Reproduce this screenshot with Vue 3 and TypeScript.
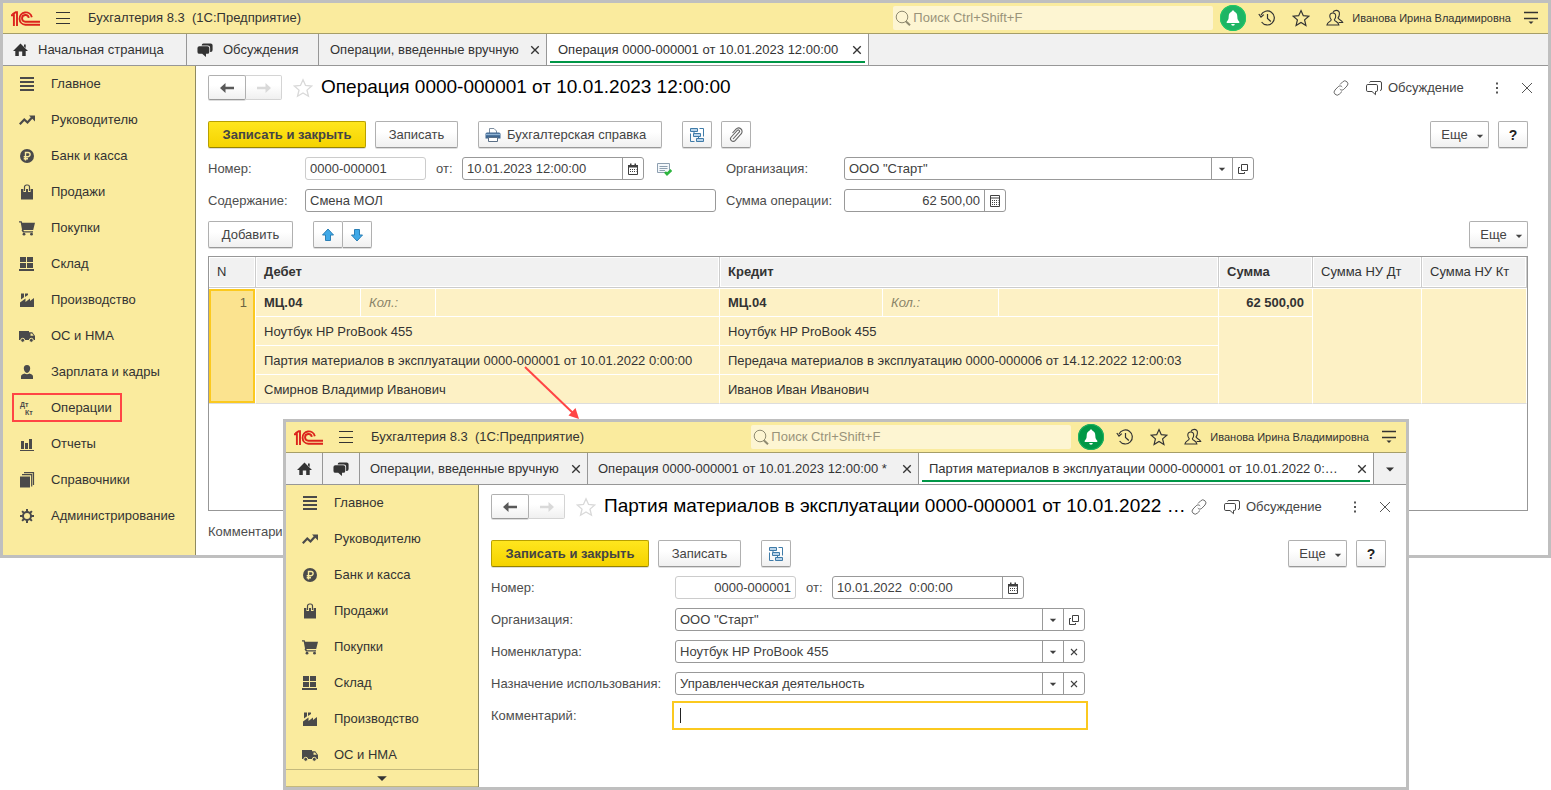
<script setup lang="ts">
import { ref } from 'vue'

interface Tab {
  label: string
  size: string
  icon?: string
  compact?: boolean
  closable?: boolean
  active?: boolean
}

interface AppWindow {
  id: 'operation' | 'batch'
  title: string
  heading: string
  tabs: Tab[]
  sections: number
}

const sections = [
  { icon: 'list', label: 'Главное' },
  { icon: 'trend', label: 'Руководителю' },
  { icon: 'ruble', label: 'Банк и касса' },
  { icon: 'bag', label: 'Продажи' },
  { icon: 'cart', label: 'Покупки' },
  { icon: 'boxes', label: 'Склад' },
  { icon: 'factory', label: 'Производство' },
  { icon: 'truck', label: 'ОС и НМА' },
  { icon: 'person', label: 'Зарплата и кадры' },
  { icon: 'dtkt', label: 'Операции' },
  { icon: 'chart', label: 'Отчеты' },
  { icon: 'books', label: 'Справочники' },
  { icon: 'gear', label: 'Администрирование' },
]

const windows: AppWindow[] = [
  {
    id: 'operation',
    title: 'Бухгалтерия 8.3  (1С:Предприятие)',
    heading: 'Операция 0000-000001 от 10.01.2023 12:00:00',
    sections: 13,
    tabs: [
      { label: 'Начальная страница', icon: 'home', size: 'tab-start' },
      { label: 'Обсуждения', icon: 'talk', size: 'tab-talk' },
      { label: 'Операции, введенные вручную', size: 'tab-list', closable: true },
      { label: 'Операция 0000-000001 от 10.01.2023 12:00:00', size: 'tab-doc', closable: true, active: true },
    ],
  },
  {
    id: 'batch',
    title: 'Бухгалтерия 8.3  (1С:Предприятие)',
    heading: 'Партия материалов в эксплуатации 0000-000001 от 10.01.2022 …',
    sections: 8,
    tabs: [
      { label: 'Начальная страница', icon: 'home', size: 'tab-icon', compact: true },
      { label: 'Обсуждения', icon: 'talk', size: 'tab-icon', compact: true },
      { label: 'Операции, введенные вручную', size: 'tab-list', closable: true },
      { label: 'Операция 0000-000001 от 10.01.2023 12:00:00 *', size: 'tab-changed', closable: true },
      { label: 'Партия материалов в эксплуатации 0000-000001 от 10.01.2022 0:…', size: 'tab-fill', closable: true, active: true },
    ],
  },
]

const operation = ref({
  number: '0000-000001',
  date: '10.01.2023 12:00:00',
  content: 'Смена МОЛ',
  amount: '62 500,00',
  comment: '',
})

const batch = ref({
  number: '0000-000001',
  date: '10.01.2022  0:00:00',
  comment: '',
})

const details = [
  { debit: 'Ноутбук HP ProBook 455', credit: 'Ноутбук HP ProBook 455' },
  {
    debit: 'Партия материалов в эксплуатации 0000-000001 от 10.01.2022 0:00:00',
    credit: 'Передача материалов в эксплуатацию 0000-000006 от 14.12.2022 12:00:03',
  },
  { debit: 'Смирнов Владимир Иванович', credit: 'Иванов Иван Иванович' },
]

const batchChoices = [
  { id: 'batch-item', label: 'Номенклатура:', value: 'Ноутбук HP ProBook 455' },
  { id: 'batch-use', label: 'Назначение использования:', value: 'Управленческая деятельность' },
]
</script>

<template>
  <svg class="sprite" aria-hidden="true">
    <symbol id="logo" viewBox="0 0 29 15">
      <g fill="none" stroke="#dc231c" stroke-width="1.9">
        <path d="M0 4.200H2.900V15M1.500 3.400 4.700 1.200H6V15" />
        <path d="M20.800 6.200A6.200 6.200 0 1 0 14.400 13.800H29" />
        <path d="M17.800 6.800A3.400 3.400 0 1 0 14.400 10.800H29" />
      </g>
    </symbol>
    <symbol id="burger" viewBox="0 0 14 14"><path d="M0 1.500H14M0 7.500H14M0 12.500H14" stroke="currentColor" /></symbol>
    <symbol id="search" viewBox="0 0 16 16"><g fill="none" stroke="currentColor"><circle cx="7" cy="7" r="5.800" /><path d="M11 11.500 15 15.300" stroke-width="2" /></g></symbol>
    <symbol id="bell" viewBox="0 0 26 26"><path d="M13 5.500c.9 0 1.400.6 1.400 1.300 2 .7 2.900 2.400 2.900 4.700 0 3 .8 4 2 5.300v1.200H6.700v-1.200c1.200-1.300 2-2.300 2-5.300 0-2.300.9-4 2.900-4.700 0-.7.5-1.300 1.400-1.300zM11.200 19h3.600a1.800 1.800 0 0 1-3.600 0z" fill="#fff" /></symbol>
    <symbol id="history" viewBox="0 0 18 18"><g fill="none" stroke="currentColor" stroke-width="1.200"><path d="M3 6A7 7 0 1 1 3.600 13" /><path d="M.8 5 3 8 5.800 5.600M9.500 5v4.500l3.300 3" /></g></symbol>
    <symbol id="star" viewBox="0 0 18 18"><path d="M9 1.600 11.300 6.700 16.800 7.200 12.600 10.900 13.900 16.400 9 13.500 4.100 16.400 5.400 10.900 1.200 7.200 6.700 6.700z" fill="none" stroke="currentColor" stroke-width="1.200" /></symbol>
    <symbol id="people" viewBox="0 0 18 18"><g fill="none" stroke="currentColor" stroke-width="1.100"><path d="M7 3.500C7.400 2 8.700 1.400 10.200 1.400c2.300 0 3.400 1.500 3.200 3.700-.1 1.700-.6 2.900-1.400 3.800.2 1.800 3.800 1.700 4.700 4.600h-4" /><path d="M6.800 4c2 0 3 1.400 2.900 3.300-.1 1.500-.6 2.500-1.300 3.400.2 2 4 1.900 4.500 5.300H.9c.5-3.400 4.100-3.300 4.300-5.300-.8-.9-1.300-1.900-1.400-3.400C3.700 5.400 4.800 4 6.800 4z" /></g></symbol>
    <symbol id="service" viewBox="0 0 14 14"><path d="M0 1.500H14M0 7.500H14" stroke="currentColor" stroke-width="1.300" /><path d="M4.500 10.500h5L7 13z" fill="currentColor" /></symbol>

    <symbol id="home" viewBox="0 0 16 16"><path d="M8 1.500 15.500 9H13.200V14H9.700V9.500H6.300V14H2.800V9H.5zM11.500 2.500h1.700V6l-1.700-1.600z" fill="currentColor" /></symbol>
    <symbol id="talk" viewBox="0 0 18 16"><g fill="currentColor"><path d="M2.500 4h8.500A2 2 0 0 1 13 6v4a2 2 0 0 1-2 2H9.500v3.500L5.500 12h-3a2 2 0 0 1-2-2V6a2 2 0 0 1 2-2z" /><path d="M5 3.200V2.900A1.800 1.800 0 0 1 6.800 1.100h7.700a2 2 0 0 1 2 2v5a2 2 0 0 1-2 2h-.6V5.500a2.300 2.300 0 0 0-2.300-2.300z" /></g></symbol>

    <symbol id="list" viewBox="0 0 16 16"><path d="M1 2H15M1 6H15M1 10H15M1 14H15" stroke="currentColor" stroke-width="2" /></symbol>
    <symbol id="trend" viewBox="0 0 16 16"><path d="M.8 12.300 5.300 7.500 8.500 10.500 13 5.500" fill="none" stroke="currentColor" stroke-width="2.200" /><path d="M10 3.500h6v6z" fill="currentColor" /></symbol>
    <symbol id="ruble" viewBox="0 0 16 16"><circle cx="8" cy="8" r="7" fill="currentColor" /><path d="M6.500 12.500V4.500H9a2.100 2.100 0 0 1 0 4.200H4.700M4.700 10.700H9" fill="none" stroke="#faeb9e" stroke-width="1.400" /></symbol>
    <symbol id="bag" viewBox="0 0 16 16"><path d="M2 5H14V15.500H2z" fill="currentColor" /><path d="M5.700 8V3.300A1.800 1.800 0 0 1 7.500 1.200H8.500A1.800 1.800 0 0 1 10.300 3.300V8" fill="none" stroke="#faeb9e" stroke-width="2.600" /><path d="M5.500 7V3A2 2 0 0 1 7.500 1H8.500A2 2 0 0 1 10.500 3V7" fill="none" stroke="currentColor" stroke-width="1.200" /></symbol>
    <symbol id="cart" viewBox="0 0 16 16"><path d="M0 1.300H2.700L3.200 2.800H16L14.200 10H4.300L5 11.200H14V12.600H4L2.600 10.500 3 9.600 1.700 2.600H0z" fill="currentColor" /><circle cx="5" cy="14.200" r="1.400" fill="currentColor" /><circle cx="12.500" cy="14.200" r="1.400" fill="currentColor" /></symbol>
    <symbol id="boxes" viewBox="0 0 16 16"><path d="M1 1h6v5H1zM8 1H14v5H8zM1 7h6V12H1zM8 7H14V12H8zM0 13h15V15H0z" fill="currentColor" /></symbol>
    <symbol id="factory" viewBox="0 0 16 16"><path d="M1 15V10.500L6.500 6.500V10L11 6.500V9L15 6V15zM2 1.500H5V5.300L2 7.500zM6 1.500H9V3L6 5z" fill="currentColor" /></symbol>
    <symbol id="truck" viewBox="0 0 16 16"><path d="M0 3H10V12H0zM10 4.300h3.300L16 8v4h-6z" fill="currentColor" /><path d="M11.500 5.500h1.600l1.600 2.300h-3.200z" fill="#faeb9e" /><g fill="currentColor" stroke="#faeb9e"><circle cx="3.700" cy="12.300" r="2" /><circle cx="12.300" cy="12.300" r="2" /></g></symbol>
    <symbol id="person" viewBox="0 0 16 16"><path d="M8 1c2.300 0 3.300 1.600 3.200 3.600C11 7 9.800 9 8 9S5 7 4.800 4.600C4.700 2.600 5.700 1 8 1zM2 15V12.500C2 10.500 4 10 5.500 9.500 7 10.600 9 10.600 10.500 9.500 12 10 14 10.500 14 12.500V15z" fill="currentColor" /></symbol>
    <symbol id="chart" viewBox="0 0 16 16"><path d="M2 5H5V13H2zM6 7H9V13H6zM10 3H13V13H10zM1 14H15V15H1z" fill="currentColor" /></symbol>
    <symbol id="books" viewBox="0 0 16 16"><path d="M1 4.500H11V15.500H1z" fill="currentColor" /><path d="M3 2.700H12.700V14.500M5 .7H14.500V13" fill="none" stroke="currentColor" stroke-width="1.200" /></symbol>
    <symbol id="gear" viewBox="0 0 16 16"><circle cx="8" cy="8" r="4" fill="none" stroke="currentColor" stroke-width="2" /><path d="M8 1V4M8 12V15M1 8H4M12 8H15M3.100 3.100 5.200 5.200M10.800 10.800 12.900 12.900M3.100 12.900 5.200 10.800M10.800 5.200 12.900 3.100" stroke="currentColor" stroke-width="2" /></symbol>

    <symbol id="back" viewBox="0 0 16 16"><path d="M1 8 6.500 3V6.700H15V9.300H6.500V13z" fill="currentColor" /></symbol>
    <symbol id="forward" viewBox="0 0 16 16"><path d="M15 8 9.500 3V6.700H1V9.300H9.500V13z" fill="currentColor" /></symbol>
    <symbol id="link" viewBox="0 0 16 16"><g fill="none" stroke="currentColor"><path d="M7 4.500 9.700 1.800A2.600 2.600 0 0 1 14 6L10.800 9.300A2.600 2.600 0 0 1 6.800 9" /><path d="M9 11.500 6.300 14.200A2.600 2.600 0 0 1 2 10L5.200 6.700A2.600 2.600 0 0 1 9.200 7" /></g></symbol>
    <symbol id="discuss" viewBox="0 0 16 16"><g fill="none" stroke="currentColor"><path d="M1.800 4.500H10.200A1.300 1.300 0 0 1 11.500 5.800V10.200A1.300 1.300 0 0 1 10.200 11.500H9.500V14.700L6 11.500H1.800A1.300 1.300 0 0 1 .5 10.200V5.800A1.300 1.300 0 0 1 1.800 4.500z" /><path d="M3.500 2.500A1.500 1.500 0 0 1 5 1.500H14A1.500 1.500 0 0 1 15.500 3V9A1.500 1.500 0 0 1 14 10.500" /></g></symbol>
    <symbol id="dots" viewBox="0 0 16 16"><path d="M7 2.500h2v2H7zM7 7h2v2H7zM7 11.500h2v2H7z" fill="currentColor" /></symbol>
    <symbol id="cross" viewBox="0 0 16 16"><path d="M3 3 13 13M13 3 3 13" stroke="currentColor" /></symbol>
    <symbol id="small-cross" viewBox="0 0 8 8"><path d="M1 1 7 7M7 1 1 7" stroke="currentColor" stroke-width="1.100" /></symbol>
    <symbol id="caret-down" viewBox="0 0 10 10"><path d="M1 3.500H9L5 7.500z" fill="currentColor" /></symbol>

    <symbol id="print" viewBox="0 0 16 16"><path d="M4.500 6V1.500H9L11.500 4V6" fill="#fff" stroke="#7d8ea0" /><path d="M2 5.500H14A1.500 1.500 0 0 1 15.500 7V11.500H.5V7A1.500 1.500 0 0 1 2 5.500z" fill="#3f6791" /><path d="M1 7.500H15" stroke="#8fb3d4" stroke-width="1.400" /><path d="M3.500 10.500H12.500V14.500H3.500z" fill="#fff" stroke="#5a6f86" /></symbol>
    <symbol id="structure" viewBox="0 0 16 16"><g stroke="#3f7ba8" fill="#b9d4ea"><path d="M1.500 1.500H8.500V4.500H1.500zM4.500 6.500H11.500V9.500H4.500zM7.500 11.500H14.500V14.500H7.500z" /><path d="M10.500 1.500H14.500V9.500M5.500 14.500H1.500V6.500M5 4.500V6.500M9.500 9.500V11.500" fill="none" /></g></symbol>
    <symbol id="clip" viewBox="0 0 16 16"><path d="M5 12 11.200 5.200A1.300 1.300 0 0 0 9.300 3.400L3.300 10A2.600 2.600 0 0 0 7.100 13.600L13.100 7A3.500 3.500 0 0 0 8 2.100L4.500 6" fill="none" stroke="#666" stroke-width="1.100" /></symbol>
    <symbol id="calendar" viewBox="0 0 12 12"><path d="M1.500 2.500H10.500V11.500H1.500z" fill="#fff" stroke="currentColor" /><path d="M1 2H11V4.500H1zM3 .5h1.500V3H3zM7.500 .5H9V3H7.500z" fill="currentColor" /><path d="M3 6.500H9.500M3 8.500H9.500" stroke="currentColor" stroke-dasharray="1 1" /></symbol>
    <symbol id="calculator" viewBox="0 0 12 12"><path d="M1.500 .5H10.500V11.500H1.500z" fill="#fff" stroke="currentColor" /><path d="M2 3H10" stroke="currentColor" stroke-width="1" /><path d="M3 5.500H9.500M3 7.500H9.500M3 9.500H9.500" stroke="currentColor" stroke-dasharray="1 1" /></symbol>
    <symbol id="open" viewBox="0 0 12 12"><path d="M4.500 1.500H10.500V7.500H4.500zM3 4.500H1.500V10.500H7.500V9" fill="none" stroke="currentColor" /></symbol>
    <symbol id="posted" viewBox="0 0 16 16"><path d="M1.500 2.500H13.500V11.500H1.500z" fill="#f4f8fb" stroke="#8d9fb0" /><path d="M3.500 5.500H11.500M3.500 7.500H11.500M3.500 9.500H9" stroke="#8d9fb0" /><path d="M9 11 11 13.200 15.300 9" fill="none" stroke="#2db53f" stroke-width="2.600" /></symbol>
    <symbol id="arrow-up" viewBox="0 0 14 14"><path d="M7 1 12.500 7H9.500V12.500H4.500V7H1.500z" fill="#3fa9e8" stroke="#2b7fb5" /></symbol>
    <symbol id="arrow-down" viewBox="0 0 14 14"><path d="M7 13 12.500 7H9.500V1.500H4.500V7H1.500z" fill="#3fa9e8" stroke="#2b7fb5" /></symbol>
  </svg>

  <main class="desktop">
    <section v-for="w in windows" :key="w.id" class="window" :class="w.id" :aria-label="w.heading">
      <header class="title-bar">
        <svg class="logo"><use href="#logo" /></svg>
        <button class="plain" aria-label="Меню"><svg class="i14"><use href="#burger" /></svg></button>
        <span class="app-name">{{ w.title }}</span>
        <label class="search">
          <svg class="i16"><use href="#search" /></svg>
          <input type="search" placeholder="Поиск Ctrl+Shift+F" aria-label="Поиск" />
        </label>
        <button class="plain bell" aria-label="Уведомления"><svg class="i26"><use href="#bell" /></svg></button>
        <div class="tools">
          <button class="plain" aria-label="История"><svg class="i18"><use href="#history" /></svg></button>
          <button class="plain" aria-label="Избранное"><svg class="i18"><use href="#star" /></svg></button>
          <button class="plain" aria-label="Пользователи"><svg class="i18"><use href="#people" /></svg></button>
        </div>
        <span class="user">Иванова Ирина Владимировна</span>
        <button class="plain" aria-label="Сервис"><svg class="i14"><use href="#service" /></svg></button>
      </header>

      <nav class="tabs" aria-label="Открытые окна">
        <div v-for="tab in w.tabs" :key="tab.label" class="tab" :class="[tab.size, { active: tab.active }]">
          <button class="plain tab-button" :aria-label="tab.label">
            <svg v-if="tab.icon" class="tab-glyph"><use :href="'#' + tab.icon" /></svg>
            <span v-if="!tab.compact" class="tab-label">{{ tab.label }}</span>
          </button>
          <button v-if="tab.closable" class="plain" aria-label="Закрыть вкладку"><svg class="i10"><use href="#small-cross" /></svg></button>
        </div>
        <button v-if="w.id === 'batch'" class="plain more-tabs" aria-label="Все вкладки"><svg class="i10"><use href="#caret-down" /></svg></button>
      </nav>

      <div class="body">
        <aside class="sidebar">
          <a
            v-for="s in sections.slice(0, w.sections)"
            :key="s.label"
            href="#"
            class="section"
            :class="{ marked: s.icon === 'dtkt' }"
          >
            <svg v-if="s.icon === 'dtkt'" class="i16 letters" viewBox="0 0 16 16" aria-hidden="true">
              <text x="1" y="7">Дт</text>
              <text x="6" y="15">Кт</text>
            </svg>
            <svg v-else class="i16"><use :href="'#' + s.icon" /></svg>{{ s.label }}
          </a>
          <button v-if="w.id === 'batch'" class="plain scroll-down" aria-label="Прокрутить вниз"><svg class="i12"><use href="#caret-down" /></svg></button>
        </aside>

        <div class="content">
          <div class="heading-row">
            <div class="pair">
              <button class="button nav" aria-label="Назад"><svg class="i16"><use href="#back" /></svg></button>
              <button class="button nav disabled" aria-label="Вперед" disabled><svg class="i16"><use href="#forward" /></svg></button>
            </div>
            <button class="plain favorite" aria-label="В избранное"><svg class="i20"><use href="#star" /></svg></button>
            <h1>{{ w.heading }}</h1>
            <button class="plain link" aria-label="Ссылка"><svg class="i16"><use href="#link" /></svg></button>
            <button class="plain discuss"><svg class="i16"><use href="#discuss" /></svg>Обсуждение</button>
            <button class="plain dots" aria-label="Еще действия"><svg class="i16"><use href="#dots" /></svg></button>
            <button class="plain close" aria-label="Закрыть"><svg class="i16"><use href="#cross" /></svg></button>
          </div>

          <div class="commands">
            <button class="button primary">Записать и закрыть</button>
            <button class="button save">Записать</button>
            <button v-if="w.id === 'operation'" class="button report group">
              <svg class="i16"><use href="#print" /></svg>Бухгалтерская справка
            </button>
            <button class="button square group" aria-label="Структура подчиненности"><svg class="i16"><use href="#structure" /></svg></button>
            <button v-if="w.id === 'operation'" class="button square" aria-label="Присоединенные файлы"><svg class="i16"><use href="#clip" /></svg></button>
            <button class="button more">Еще<svg class="i8"><use href="#caret-down" /></svg></button>
            <button class="button square help">?</button>
          </div>

          <template v-if="w.id === 'operation'">
            <div class="form operation-form">
              <label for="op-number">Номер:</label>
              <div class="line">
                <input id="op-number" v-model="operation.number" class="field number" />
                <label for="op-date" class="from">от:</label>
                <div class="field date">
                  <input id="op-date" v-model="operation.date" />
                  <button class="plain cell" aria-label="Календарь"><svg class="i12"><use href="#calendar" /></svg></button>
                </div>
                <svg class="i16 posted"><use href="#posted" /></svg>
              </div>
              <label for="op-org" class="second">Организация:</label>
              <div class="field combo">
                <select id="op-org"><option>ООО "Старт"</option></select>
                <span class="cell arrow"><svg class="i8"><use href="#caret-down" /></svg></span>
                <button class="plain cell" aria-label="Открыть"><svg class="i12"><use href="#open" /></svg></button>
              </div>
              <label for="op-content">Содержание:</label>
              <input id="op-content" v-model="operation.content" class="field" />
              <label for="op-amount" class="second">Сумма операции:</label>
              <div class="field amount">
                <input id="op-amount" v-model="operation.amount" />
                <button class="plain cell" aria-label="Калькулятор"><svg class="i12"><use href="#calculator" /></svg></button>
              </div>
            </div>

            <div class="commands row-commands">
              <button class="button add">Добавить</button>
              <div class="pair group">
                <button class="button move" aria-label="Вверх"><svg class="i14"><use href="#arrow-up" /></svg></button>
                <button class="button move" aria-label="Вниз"><svg class="i14"><use href="#arrow-down" /></svg></button>
              </div>
              <button class="button more">Еще<svg class="i8"><use href="#caret-down" /></svg></button>
            </div>

            <div class="table-frame">
              <table>
                <colgroup>
                  <col class="c-n" /><col class="c-dt" /><col class="c-dq" /><col class="c-dr" />
                  <col class="c-kt" /><col class="c-kq" /><col /><col class="c-sum" /><col class="c-nud" /><col class="c-nuk" />
                </colgroup>
                <thead>
                  <tr>
                    <th class="light">N</th>
                    <th colspan="3">Дебет</th>
                    <th colspan="3">Кредит</th>
                    <th>Сумма</th>
                    <th class="light">Сумма НУ Дт</th>
                    <th class="light">Сумма НУ Кт</th>
                  </tr>
                </thead>
                <tbody>
                  <tr class="first">
                    <td rowspan="4" class="current">1</td>
                    <td class="account">МЦ.04</td>
                    <td class="quantity">Кол.:</td>
                    <td></td>
                    <td class="account">МЦ.04</td>
                    <td class="quantity">Кол.:</td>
                    <td></td>
                    <td class="sum">62 500,00</td>
                    <td rowspan="4" class="tall"></td>
                    <td rowspan="4" class="tall"></td>
                  </tr>
                  <tr v-for="(d, i) in details" :key="i">
                    <td colspan="3">{{ d.debit }}</td>
                    <td colspan="3">{{ d.credit }}</td>
                    <td v-if="i === 0" rowspan="3" class="tall"></td>
                  </tr>
                </tbody>
              </table>
            </div>

            <div class="form operation-form comment">
              <label for="op-comment">Комментарий:</label>
              <input id="op-comment" v-model="operation.comment" class="field" />
            </div>
          </template>

          <div v-else class="form batch-form">
            <label for="batch-number">Номер:</label>
            <div class="line">
              <input id="batch-number" v-model="batch.number" class="field number right" />
              <label for="batch-date" class="from">от:</label>
              <div class="field date wide">
                <input id="batch-date" v-model="batch.date" />
                <button class="plain cell" aria-label="Календарь"><svg class="i12"><use href="#calendar" /></svg></button>
              </div>
            </div>
            <label for="batch-org">Организация:</label>
            <div class="field combo">
              <select id="batch-org"><option>ООО "Старт"</option></select>
              <span class="cell arrow"><svg class="i8"><use href="#caret-down" /></svg></span>
              <button class="plain cell" aria-label="Открыть"><svg class="i12"><use href="#open" /></svg></button>
            </div>
            <template v-for="c in batchChoices" :key="c.id">
              <label :for="c.id">{{ c.label }}</label>
              <div class="field combo">
                <select :id="c.id"><option>{{ c.value }}</option></select>
                <span class="cell arrow"><svg class="i8"><use href="#caret-down" /></svg></span>
                <button class="plain cell" aria-label="Очистить"><svg class="i8"><use href="#small-cross" /></svg></button>
              </div>
            </template>
            <label for="batch-comment">Комментарий:</label>
            <div class="focused">
              <input id="batch-comment" v-model="batch.comment" />
              <i class="text-cursor"></i>
            </div>
          </div>
        </div>
      </div>
    </section>

    <svg class="pointer" viewBox="0 0 58 56" aria-hidden="true">
      <path d="M1 2 50 49" stroke="#ff4545" stroke-width="2" />
      <path d="M55 54 44.500 50.500 51.500 43z" fill="#ff4545" />
    </svg>
  </main>
</template>

<style>
body {
  background: #fff;
}
</style>

<style scoped>
.sprite {
  position: absolute;
  width: 0;
  height: 0;
}

.desktop {
  position: relative;
  min-height: 100vh;
  overflow: hidden;
  font-family: 'Liberation Sans', Arial, sans-serif;
  font-size: 13px;
  line-height: 16px;
  color: #404040;
}

.desktop *,
.desktop *::after {
  box-sizing: border-box;
}

svg {
  display: block;
  flex: none;
}

.i8 { width: 8px; height: 8px; }
.i10 { width: 10px; height: 10px; }
.i12 { width: 12px; height: 12px; }
.i14 { width: 14px; height: 14px; }
.i16 { width: 16px; height: 16px; }
.i18 { width: 18px; height: 18px; }
.i20 { width: 20px; height: 20px; }
.i26 { width: 26px; height: 26px; }

button,
input,
select {
  font: inherit;
  color: inherit;
  margin: 0;
}

.plain {
  display: flex;
  align-items: center;
  flex: none;
  padding: 0;
  border: 0;
  background: none;
}

.window {
  border: 3px solid #bfbfbf;
  background: #fff;
}

.batch {
  position: absolute;
  left: 283px;
  top: 419px;
  width: 1126px;
}

.title-bar {
  display: flex;
  align-items: center;
  height: 31px;
  padding: 0 10px 0 8px;
  border-bottom: 1px solid #a69e68;
  background: #faeb9e;
  color: #333;
}

.logo {
  width: 29px;
  height: 15px;
  margin-right: 16px;
}

.app-name {
  margin: 0 auto 0 18px;
  white-space: pre;
}

.search {
  display: flex;
  align-items: center;
  width: 320px;
  height: 24px;
  padding-left: 2px;
  border-radius: 2px;
  background: #fdf5d2;
  color: #8f8a70;
}

.search input {
  flex: 1;
  min-width: 0;
  padding: 0 0 0 2px;
  border: 0;
  outline: 0;
  background: none;
}

.search input::placeholder {
  color: #99937a;
}

.bell {
  margin: 0 12px 0 7px;
  border-radius: 50%;
  background: #1db564;
  box-shadow: inset 0 0 0 1px #22c968;
}

.batch .bell {
  background: #009846;
  box-shadow: inset 0 0 0 1px #1fb262;
}

.tools {
  display: flex;
  gap: 16px;
}

.user {
  margin: 0 13px 0 8px;
  font-size: 11px;
  white-space: nowrap;
}

.tabs {
  display: flex;
  height: 32px;
  border-bottom: 1px solid #979797;
  background: #f1f1f1;
  color: #333;
}

.tab {
  position: relative;
  display: flex;
  align-items: center;
  justify-content: space-between;
  padding: 0 6px 0 11px;
  border-right: 1px solid #979797;
}

.batch .tab {
  padding-left: 10px;
}

.tab-button {
  flex: 0 1 auto;
  min-width: 0;
  gap: 9px;
}

.tab-label {
  white-space: nowrap;
}

.tab-glyph {
  width: 17px;
  height: 16px;
}

.tab-start { width: 184px; padding-left: 9px; }
.tab-talk { width: 132px; padding-left: 10px; }
.tab-list { width: 228px; }
.tab-doc { width: 322px; }
.tab-changed { width: 331px; }
.batch .tab-icon { width: 37px; justify-content: center; padding: 0; }
.tab-fill { flex: 1; min-width: 0; }

.tab.active {
  background: #fff;
}

.tab.active::after {
  content: '';
  position: absolute;
  left: 3px;
  right: 3px;
  bottom: 2px;
  height: 2px;
  background: #009646;
}

.more-tabs {
  width: 32px;
  justify-content: center;
}

.body {
  display: flex;
}

.sidebar {
  flex: none;
  width: 193px;
  border-right: 1px solid #8f8a60;
  background: #faeb9e;
  color: #4a4a4a;
}

.section {
  position: relative;
  display: flex;
  align-items: center;
  gap: 16px;
  height: 36px;
  padding-left: 16px;
  color: #333;
  text-decoration: none;
}

.section svg {
  color: #4a4a4a;
}

.letters {
  overflow: visible;
  font-size: 7px;
  font-weight: 700;
  fill: #4a4a4a;
}

.section.marked::after {
  content: '';
  position: absolute;
  inset: 3px 73px 4px 9px;
  border: 2px solid #ff4545;
}

.batch .section:nth-child(8) {
  height: 32px;
  padding-top: 4px;
}

.scroll-down {
  justify-content: center;
  width: 100%;
  height: 18px;
  border-top: 1px solid #c4b97c;
  border-bottom: 1px solid #c4b97c;
  color: #333;
}

.content {
  flex: 1;
  min-width: 0;
  padding: 9px 20px 12px 12px;
}

.heading-row {
  display: flex;
  align-items: center;
  height: 25px;
  margin: 0 -7px 21px 0;
}

.pair {
  display: flex;
}

.button {
  display: flex;
  align-items: center;
  justify-content: center;
  flex: none;
  height: 27px;
  padding: 0;
  border: 1px solid #b0b0b0;
  border-bottom-color: #999;
  border-radius: 2px;
  background: linear-gradient(#fff 40%, #f0f0f0);
  box-shadow: 0 1px 0 #ddd;
  color: #444;
}

.pair .button + .button {
  border-left: 0;
  border-radius: 0 2px 2px 0;
}

.nav {
  width: 38px;
  height: 25px;
  color: #595959;
}

.nav.disabled {
  width: 36px;
  border-color: #d4d4d4;
  box-shadow: none;
  color: #d9d9d9;
}

.favorite {
  margin: 0 8px 0 11px;
  color: #d9d9d9;
}

h1 {
  flex: 1;
  min-width: 0;
  margin: 0;
  font-size: 19px;
  font-weight: 400;
  line-height: 23px;
  padding-bottom: 2px;
  color: #000;
  white-space: nowrap;
}

.link { color: #6b6b6b; }
.discuss { gap: 6px; width: 100px; margin: 0 23px 0 17px; color: #444; }
.dots { color: #555; }
.close { margin-left: 14px; color: #555; }

.commands {
  display: flex;
  gap: 9px;
  margin-bottom: 9px;
}

.row-commands {
  margin: 9px 0 8px;
}

.group { margin-left: 11px; }
.primary {
  width: 158px;
  border-color: #b8a000;
  border-bottom-color: #968300;
  background: linear-gradient(#ffe61e, #f5d300);
  font-weight: 700;
}
.save { width: 83px; }
.report { width: 184px; gap: 6px; justify-content: flex-start; padding-left: 6px; }
.square { width: 30px; }
.add { width: 85px; }
.move { width: 30px; }
.move + .move { width: 29px; }
.more { width: 59px; gap: 8px; padding-left: 6px; margin-left: auto; }
.more svg { margin-top: 3px; }
.help { font-size: 14px; font-weight: 700; color: #222; }

.form {
  display: grid;
  align-items: center;
  grid-auto-rows: 23px;
  row-gap: 9px;
}

.operation-form {
  grid-template-columns: 97px minmax(0, 411px) 128px minmax(0, 410px);
}

.batch-form {
  grid-template-columns: 184px minmax(0, 410px);
}

.form label {
  white-space: nowrap;
  color: #4d4d4d;
}

.second {
  padding-left: 10px;
}

.line {
  display: flex;
  align-items: center;
}

.field {
  height: 23px;
  min-width: 0;
  padding: 0 4px;
  border: 1px solid #999;
  border-radius: 3px;
  background: #fff;
  color: #404040;
}

.number {
  width: 121px;
  border-color: #ccc;
}

.right {
  text-align: right;
}

.from {
  width: 36px;
  padding-left: 10px;
}

.date,
.amount {
  display: flex;
  width: 182px;
  padding: 0;
}

.date.wide { width: 192px; }
.amount { width: 162px; }
.amount input { text-align: right; }

.date input,
.amount input {
  flex: 1;
  min-width: 0;
  padding: 0 4px;
  border: 0;
  outline: 0;
  background: none;
}

.cell {
  display: flex;
  align-items: center;
  justify-content: center;
  width: 21px;
  border-left: 1px solid #999;
}

.posted {
  margin-left: 12px;
}

.combo {
  display: grid;
  grid-template-columns: 1fr 21px 21px;
  padding: 0;
}

.combo select {
  grid-area: 1 / 1 / 2 / 3;
  appearance: none;
  min-width: 0;
  padding: 0 25px 0 4px;
  border: 0;
  outline: 0;
  background: none;
}

.arrow {
  grid-area: 1 / 2;
  pointer-events: none;
}

.focused {
  position: relative;
  height: 23px;
  outline: 2px solid #fbc91f;
  outline-offset: 1px;
}

.focused input {
  width: 100%;
  height: 23px;
  padding: 0 5px;
  border: 0;
  outline: 0;
}

.text-cursor {
  position: absolute;
  left: 5px;
  top: 4px;
  width: 1px;
  height: 15px;
  background: #222;
}

.table-frame {
  min-height: 255px;
  margin-bottom: 9px;
  border: 1px solid #979797;
}

table {
  width: 100%;
  table-layout: fixed;
  border-collapse: separate;
  border-spacing: 0;
  color: #333;
}

.c-n { width: 47px; }
.c-dt { width: 105px; }
.c-dq { width: 75px; }
.c-dr { width: 284px; }
.c-kt { width: 163px; }
.c-kq { width: 116px; }
.c-sum { width: 94px; }
.c-nud { width: 109px; }
.c-nuk { width: 105px; }

th {
  height: 31px;
  padding: 0 8px;
  border-right: 1px solid #ccc;
  border-bottom: 1px solid #ccc;
  background: #f1f1f1;
  box-shadow: inset 0 0 0 1px #fff;
  text-align: left;
  white-space: nowrap;
}

.light {
  font-weight: 400;
}

td {
  height: 29px;
  padding: 1px 8px 0;
  border-right: 1px solid #fff;
  border-bottom: 1px solid #fff;
  background: #fdf1c5;
  white-space: nowrap;
}

.first td {
  border-top: 1px solid #fff;
}

tr:last-child td,
td.tall,
td.current {
  border-bottom-color: #ddd;
}

.account,
.sum {
  font-weight: 700;
}

.sum,
.current {
  text-align: right;
}

.quantity {
  font-style: italic;
  color: #8a8468;
}

td.current {
  padding-top: 6px;
  background: #fbe38f;
  box-shadow: inset 0 0 0 2px #fbc91f;
  vertical-align: top;
  color: #6b6444;
}

.pointer {
  position: absolute;
  left: 524px;
  top: 365px;
  width: 58px;
  height: 56px;
}
</style>
